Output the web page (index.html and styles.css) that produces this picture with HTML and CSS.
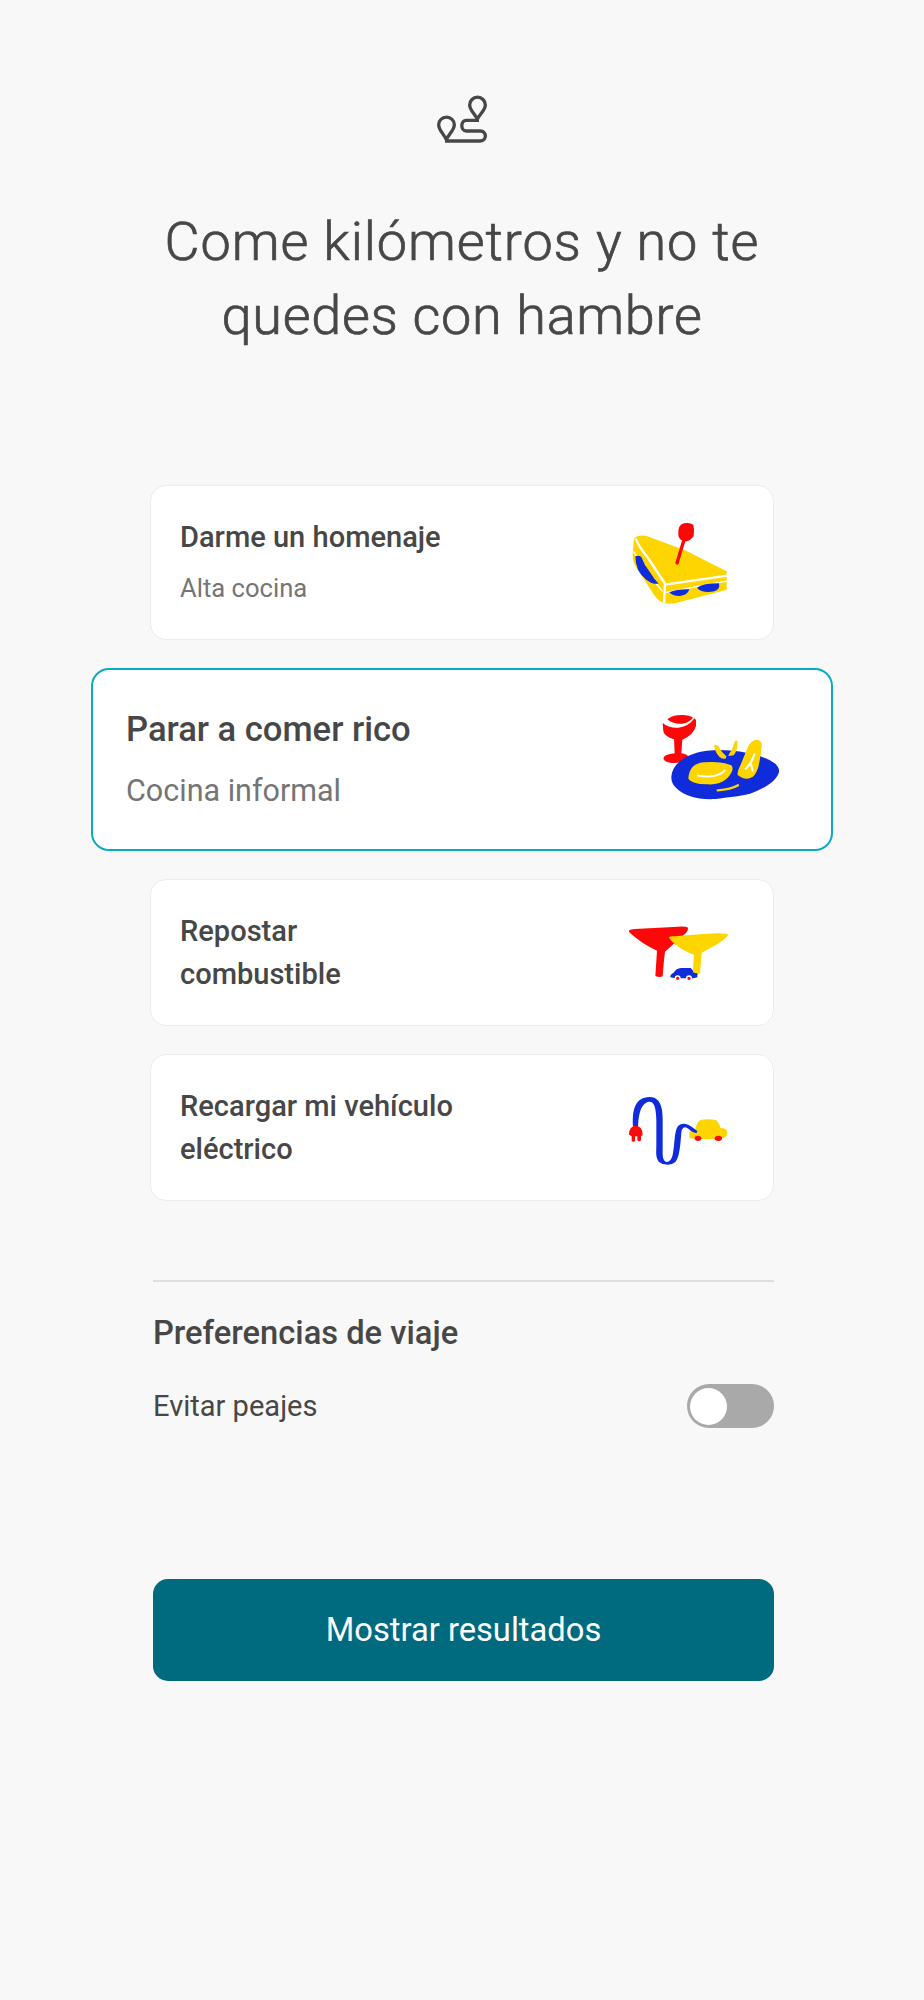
FILE: index.html
```html
<!DOCTYPE html>
<html lang="es">
<head>
<meta charset="utf-8">
<title>Planifica tu ruta</title>
<link rel="stylesheet" href="styles.css">
</head>
<body>
<main class="page">
  <svg class="route-icon" viewBox="0 0 252 222" fill="none" stroke="#474747" stroke-width="10" stroke-linejoin="round">
    <path d="M79 179C72 163 56 150 56 134a23 22 0 0 1 47 0c0 16-17 29-24 45Z"/>
    <path d="M172 118c-7-16-23-27-23-43a23 23 0 0 1 47 0c0 16-17 27-24 43Z"/>
    <path d="M177 121H139c-18 0-18 32 0 32h42c20 0 20 30 0 30H75"/>
  </svg>
  <h1 class="title"><span class="title-first">Come kilómetros y no te</span><br><span class="title-second">quedes con hambre</span></h1>

  <section class="options">
    <article class="card">
      <div class="card-text">
        <h2 class="card-title">Darme un homenaje</h2>
        <p class="card-sub">Alta cocina</p>
      </div>
      <svg class="art art-sandwich" viewBox="0 0 420 360">
        <path fill="#ffd500" d="M84 108Q98 104 112 109L225 151L350 214V269Q280 288 220 303Q185 314 164 310Q150 308 132 285L88 216Q66 190 68 164L71 122Q73 111 84 108Z"/>
        <path fill="none" stroke="#fff" stroke-width="7" d="M77 116Q87 141 114 174L165 251L162 309M165 254L352 227"/>
        <path fill="none" stroke="#fff" stroke-width="4" d="M71 155L106 210L158 275M168 277L352 243"/>
        <path fill="#102cda" d="M76 169Q85 164 94 171Q103 197 120 217Q133 239 146 251Q128 254 109 239Q76 215 76 169ZM178 277Q200 267 238 268Q233 286 209 288Q186 288 178 277ZM261 263Q278 250 327 250Q332 268 313 274Q276 281 261 263Z"/>
        <path fill="none" stroke="#fd0808" stroke-width="10" stroke-linecap="round" d="M222 119L201 189"/>
        <path fill="#fd0808" d="M222 70Q239 66 250 74Q254 90 251 109Q238 126 225 124Q206 121 205 105Q202 75 222 70Z"/>
      </svg>
    </article>

    <article class="card card-selected">
      <div class="card-text">
        <h2 class="card-title">Parar a comer rico</h2>
        <p class="card-sub">Cocina informal</p>
      </div>
      <svg class="art art-plate" viewBox="0 0 480 360">
        <path fill="#fd0808" d="M82 58Q98 44 128 45Q148 45 159 53Q149 67 127 71Q98 73 82 58ZM68 69Q86 85 116 83Q147 79 163 55L168 60V78Q160 106 127 119L124 160Q142 162 145 171Q132 188 105 189Q77 190 70 176Q72 163 104 160L102 118Q73 109 70 94Z"/>
        <path fill="#102cda" d="M94 230C97 190 139 160 201 152C257 147 306 153 361 169C401 182 423 199 416 220C405 248 372 265 330 281C294 290 266 291 226 297C171 300 133 286 111 266Q93 251 94 230Z"/>
        <path fill="#ffd500" d="M145 236Q148 190 192 187Q240 182 274 196Q282 204 273 220C259 246 232 255 200 253Q155 252 145 236ZM322 145Q332 119 352 119Q367 122 365 140Q362 170 355 202Q344 234 329 235Q310 239 293 225Q291 215 302 194ZM222 137Q228 133 235 138Q245 158 259 169L257 176Q244 178 238 170Q225 156 222 137ZM285 123Q290 119 292 125Q295 148 281 166L265 168Q269 157 275 151Z"/>
        <path fill="none" stroke="#ffd500" stroke-width="7" stroke-linecap="round" d="M233 271Q273 269 294 256"/>
        <path fill="none" stroke="#fff" stroke-width="6" stroke-linecap="round" d="M174 227Q233 236 254 212M343 163Q334 192 317 206M333 192L338 212"/>
      </svg>
    </article>

    <article class="card card-short">
      <h2 class="card-title">Repostar<br>combustible</h2>
      <svg class="art art-fuel" viewBox="0 0 420 270">
        <path fill="#fd0808" d="M57 62Q60 57 75 57L190 51Q226 47 234 53Q235 65 220 76L165 125Q161 155 158 199Q148 204 136 198L141 122Q96 102 57 66Z"/>
        <path fill="#ffd500" d="M177 82Q181 77 194 79L280 72Q348 66 355 74Q347 86 324 101L275 128L270 190Q259 201 248 193L252 134Q217 121 202 107Q182 95 177 82Z"/>
        <path fill="#102cda" d="M181 202Q179 194 191 188Q199 175 213 174H242Q249 179 251 188L262 190V202Q251 206 239 205H196Z"/>
        <g fill="#fd0808" stroke="#fff" stroke-width="4"><circle cx="203" cy="205" r="7"/><circle cx="237" cy="205" r="7"/></g>
      </svg>
    </article>

    <article class="card card-short">
      <h2 class="card-title">Recargar mi vehículo<br>eléctrico</h2>
      <svg class="art art-charge" viewBox="0 0 420 300">
        <path fill="#ffd500" d="M238 155L256 150Q260 122 275 119Q302 115 319 121Q328 130 332 144Q352 144 352 159Q351 173 336 175Q298 180 238 175Z"/>
        <path fill="#102cda" d="M69 140C66 83 78 53 118 51C151 50 158 84 158 116V222C158 253 181 253 188 225C198 175 189 129 223 131Q235 131 262 153L260 159Q248 159 236 147Q222 135 215 150C212 169 212 232 195 247Q184 257 163 253C134 247 139 220 139 195V121C138 80 132 64 117 65Q86 70 84 140Z"/>
        <path fill="#fd0808" d="M57 164Q57 138 77 137Q98 138 98 165L93 169V181Q88 187 82 181V169H75V183Q70 187 65 183V169Z"/>
        <ellipse cx="264" cy="175" rx="10" ry="8" fill="#fd0808"/><ellipse cx="325" cy="175" rx="11" ry="8" fill="#fd0808"/>
      </svg>
    </article>
  </section>

  <section class="preferences">
    <h2 class="pref-title">Preferencias de viaje</h2>
    <div class="pref-row">
      <span class="pref-label">Evitar peajes</span>
      <button class="toggle" type="button" role="switch" aria-checked="false" aria-label="Evitar peajes"><span class="knob"></span></button>
    </div>
  </section>

  <button class="submit" type="button">Mostrar resultados</button>
</main>
</body>
</html>
```
FILE: styles.css
```css
* { box-sizing: border-box; }
body { margin: 0; background: #f8f8f8; color: #474747; font-family: Roboto, "Liberation Sans", sans-serif; }
h1, h2, p { margin: 0; }
.page { min-height: 2000px; padding-top: 80px; display: flex; flex-direction: column; align-items: center; }
.route-icon { width: 84px; height: 74px; flex: none; }
.title { margin-top: 51px; height: 148px; font-size: 54px; font-weight: 300; line-height: 74px; text-align: center; white-space: nowrap; -webkit-text-stroke: 0.7px #474747; }
.title-first { letter-spacing: 0.9px; }
.title-second { letter-spacing: 0.7px; }
.options { margin-top: 132px; display: flex; flex-direction: column; align-items: center; gap: 28px; }
.card { width: 624px; height: 155px; padding: 30px 23px 0 29px; display: flex; justify-content: space-between; align-items: flex-start; background: #fff; border: 1px solid #ececec; border-radius: 16px; }
.card-title { font-size: 29.05px; font-weight: 500; line-height: 43.2px; white-space: nowrap; }
.card-sub { margin-top: 10px; font-size: 25.6px; line-height: 39px; color: #757575; white-space: nowrap; }
.card-short { height: 147px; }
.card-selected { width: 742px; height: 183px; padding: 33px 31px 0 33px; border: 2px solid #08adc3; border-radius: 18px; }
.card-selected .card-title { font-size: 34.6px; line-height: 52px; }
.card-selected .card-sub { margin-top: 12px; font-size: 30.5px; line-height: 47px; }
.art { flex: none; width: 140px; }
.art-sandwich { height: 120px; margin-top: -16px; }
.art-plate { width: 160px; height: 120px; margin-top: -3px; }
.art-fuel { height: 90px; }
.art-charge { height: 100px; margin-top: -5px; }
.preferences { width: 621px; margin-top: 79px; margin-left: 3px; padding-top: 26px; border-top: 2px solid #dfdfdf; }
.pref-title { font-size: 32.7px; font-weight: 500; line-height: 50px; }
.pref-row { margin-top: 26px; height: 44px; display: flex; justify-content: space-between; align-items: center; }
.pref-label { font-size: 29.05px; line-height: 44px; }
.toggle { width: 87px; height: 44px; padding: 0 0 0 3px; border: 0; border-radius: 22px; background: #a9a9a9; display: flex; align-items: center; }
.knob { width: 37px; height: 37px; border-radius: 50%; background: #fff; }
.submit { width: 621px; height: 102px; margin-top: 151px; margin-left: 3px; border: 0; border-radius: 15px; background: #006a7e; color: #fff; font: 400 32.7px Roboto, "Liberation Sans", sans-serif; }
```
